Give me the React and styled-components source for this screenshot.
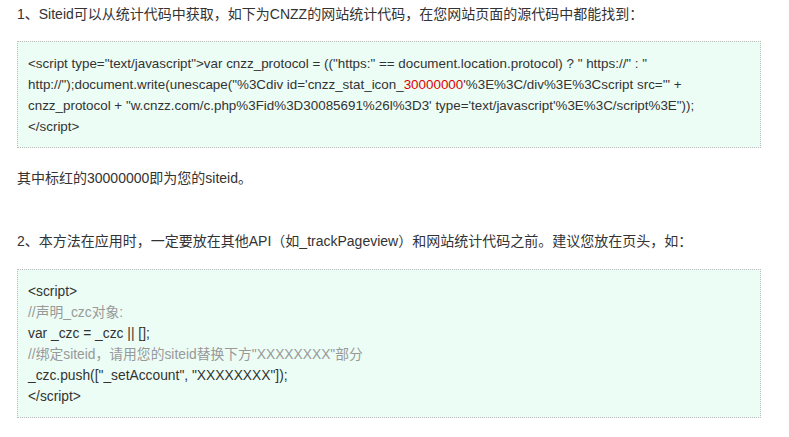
import styled, { createGlobalStyle } from 'styled-components';

const GlobalStyle = createGlobalStyle`
  body {
    margin: 0;
    background: #fff;
    font-family: "Liberation Sans", "Noto Sans CJK SC", sans-serif;
    color: #333;
  }
`;

const Page = styled.div`
  padding: 4px 28px 0 17px;
  font-size: 14px;
  line-height: 21px;
`;

const Para = styled.p.attrs(props => ({
  $marginTop: props.$marginTop || '0',
}))`
  margin: 0;
  margin-top: ${props => props.$marginTop};
  white-space: nowrap;
`;

const CodeBox = styled.div.attrs(props => ({
  $marginTop: props.$marginTop || '16px',
  $marginBottom: props.$marginBottom || '0',
  $fontSize: props.$fontSize || '13.4px',
}))`
  margin-top: ${props => props.$marginTop};
  margin-bottom: ${props => props.$marginBottom};
  padding: 11px 10px 10px;
  background: #ecfdf5;
  border: 1px dotted #b9bdbb;
  font-size: ${props => props.$fontSize};
  line-height: 21px;
`;

const Line = styled.div`
  white-space: nowrap;
`;

const Comment = styled(Line)`
  color: #999;
`;

const Red = styled.span`
  color: #e00000;
`;

export default function App() {
  return (
    <>
      <GlobalStyle />
      <Page>
        <Para>1、Siteid可以从统计代码中获取，如下为CNZZ的网站统计代码，在您网站页面的源代码中都能找到：</Para>
        <CodeBox $marginBottom="20px">
          <Line>{'<script type="text/javascript">var cnzz_protocol = (("https:" == document.location.protocol) ? " https://" : "'}</Line>
          <Line>
            {'http://");document.write(unescape("%3Cdiv id=\'cnzz_stat_icon_'}
            <Red>30000000</Red>
            {'\'%3E%3C/div%3E%3Cscript src=\'" +'}
          </Line>
          <Line>{'cnzz_protocol + "w.cnzz.com/c.php%3Fid%3D30085691%26l%3D3\' type=\'text/javascript\'%3E%3C/script%3E"));'}</Line>
          <Line>{'</script>'}</Line>
        </CodeBox>
        <Para>其中标红的30000000即为您的siteid。</Para>
        <Para $marginTop="42px">2、本方法在应用时，一定要放在其他API（如_trackPageview）和网站统计代码之前。建议您放在页头，如：</Para>
        <CodeBox $marginTop="17px" $fontSize="13.8px">
          <Line>{'<script>'}</Line>
          <Comment>//声明_czc对象:</Comment>
          <Line>{'var _czc = _czc || [];'}</Line>
          <Comment>//绑定siteid，请用您的siteid替换下方"XXXXXXXX"部分</Comment>
          <Line>{'_czc.push(["_setAccount", "XXXXXXXX"]);'}</Line>
          <Line>{'</script>'}</Line>
        </CodeBox>
      </Page>
    </>
  );
}
